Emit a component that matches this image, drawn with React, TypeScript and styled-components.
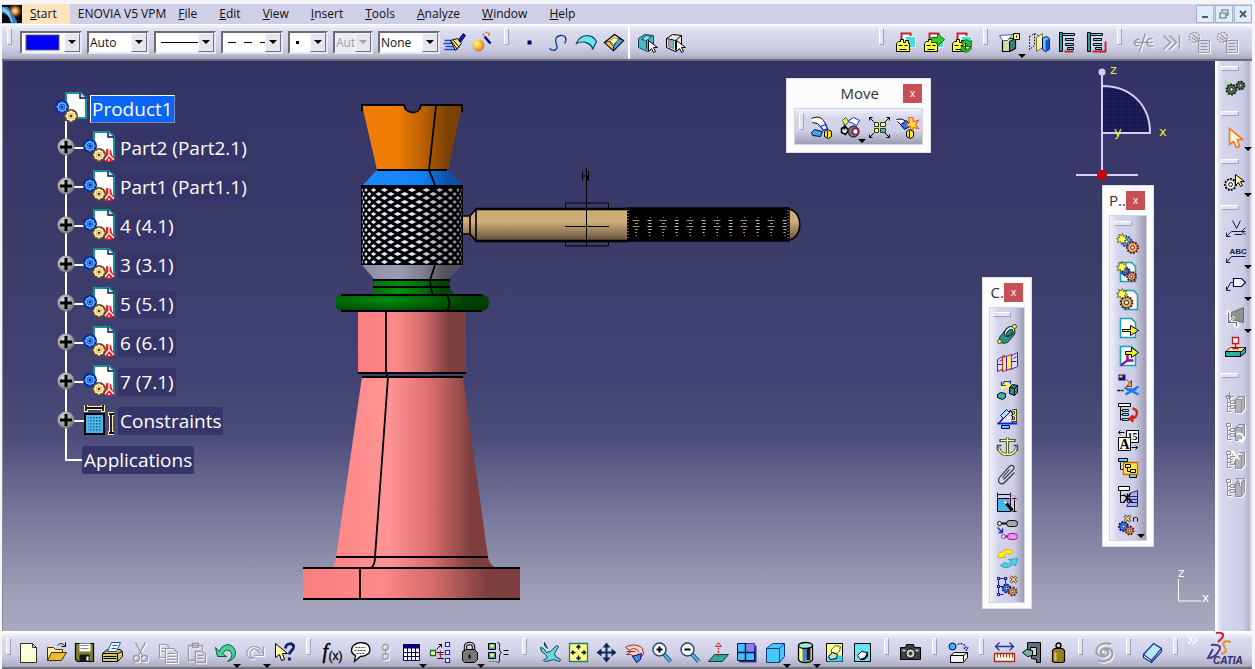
import React from 'react';
import styled, { createGlobalStyle, css } from 'styled-components';

const GlobalStyle = createGlobalStyle`
  * { box-sizing: border-box; }
  body { margin: 0; background: #f6f6fa; }
  body, button, select { font-family: "Open Sans", "Noto Sans", sans-serif; color: #111; }
  button { border: 0; padding: 0; margin: 0; background: none; }
  ul { list-style: none; margin: 0; padding: 0; }
`;

/* ---------- icon drawings, each on a 22 x 22 grid ---------- */

const K = '#000';
const NAVY = '#00007a';
const CYAN = '#5cdcf0';
const YEL = '#ffff60';

type GearProps = { x: number; y: number; r: number; fill: string; line?: string };
const Gear = ({ x, y, r, fill, line = K }: GearProps) => (
  <g>
    <circle cx={x} cy={y} r={r} fill={fill} stroke={line} strokeWidth={1.8} strokeDasharray="1.8 1.3" />
    <circle cx={x} cy={y} r={r - 0.8} fill={fill} stroke={line} strokeWidth={0.7} />
    <circle cx={x} cy={y} r={r * 0.35} fill="#fff" stroke={line} />
  </g>
);

const Sheet = ({ x = 3, y = 1, w = 15, h = 19 }) => (
  <path d={`M${x} ${y}h${w - 4}l4 4v${h - 4}h-${w}z`} fill="#fff" stroke="#18a0b4" strokeWidth={1.6} />
);

const Spark = ({ x = 6, y = 6 }) => (
  <path
    d={`M${x} ${y - 5}l1 3 3-1-1 3 2 1-3 1 1 3-3-1-1 2-1-3-3 1 1-3-2-1 3-1-1-3 3 1z`}
    fill={YEL}
    stroke="#403800"
    strokeWidth={0.7}
  />
);

const Tree = ({ c = '#8e8e98' }) => (
  <path d="M2 3h4v3H2zM3 6v13M3 10h3M3 14h3M6 8h4v3H6zM6 13h4v3H6zM3 19h4" fill="none" stroke={c} />
);

const GreyBox = () => (
  <path d="M11 7l3-3h6v12l-3 4h-6zM11 7h6l3-3M17 7v13" fill="#b4b4bc" stroke="#8e8e98" />
);

const Castle = () => (
  <g>
    <path d="M7 2h9v11H7z" fill="#fff" stroke="#c02828" strokeWidth={2} />
    <path d="M11 5h10v11H11z" fill="#50dcd8" stroke="#d8ffff" />
    <path d="M2 20v-8l2-2h2V8h3v3h2V9h3v3h1v8z" fill="#ffff40" stroke={K} />
    <path d="M4 14h4M10 14h3M5 18h7" stroke={K} fill="none" />
  </g>
);

const TreeDoc = () => (
  <g>
    <path d="M3 1h3v19H3z" fill="#20a09c" stroke={K} />
    <path d="M6 2h12v2H6zM9 7h8v2H9zM9 12h8v2H9zM11 16h6v2h-6z" fill={CYAN} stroke={K} />
    <path d="M8 20h9" stroke="#c02020" strokeWidth={2} />
  </g>
);

const Pointer = ({ x = 10, y = 8, fill = '#fff2a0', line = K }) => (
  <path d={`M${x} ${y}v11l3-3 2 4 2-1-2-4h4z`} fill={fill} stroke={line} />
);

const Lens = ({ minus = false }) => (
  <g>
    <path d="M12 12l7 8" stroke="#104a70" strokeWidth={4} />
    <path d="M12 12l7 8" stroke="#58c0dc" strokeWidth={2} />
    <circle cx={8} cy={8} r={6.5} fill="#fff" stroke="#184868" strokeWidth={1.4} />
    <path d={minus ? 'M5 8h6' : 'M5 8h6M8 5v6'} stroke={K} strokeWidth={2} />
  </g>
);

const icons: Record<string, React.ReactNode> = {
  brush: (
    <g>
      <path d="M1 9h7M0 12h9M2 15h10M1 18h11" stroke="#1048e0" strokeWidth={1.4} />
      <path d="M7 9l7-2 4 5-6 7z" fill="#ffe878" stroke={K} />
      <path d="M10 9l6 7M8 10l6 8" stroke={K} />
      <path d="M15 8l5-6 2 2-5 7z" fill="#102888" stroke={NAVY} />
    </g>
  ),
  wizard: (
    <g>
      <defs>
        <radialGradient id="ball" cx=".35" cy=".35" r=".8">
          <stop offset="0" stopColor="#fff890" />
          <stop offset=".5" stopColor="#f0b828" />
          <stop offset="1" stopColor="#c04890" />
        </radialGradient>
      </defs>
      <circle cx={7} cy={14} r={6} fill="url(#ball)" />
      <path d="M13 5l6 7" stroke={NAVY} strokeWidth={2.4} />
      <path d="M11 3h2M14 1h2M18 1l-1 3M12 6h1" stroke="#e06038" strokeWidth={1.4} />
    </g>
  ),
  point: <rect x={8} y={9} width={4} height={4} fill={NAVY} />,
  curve: <path d="M2 17c4 4 9 1 7-4s-1-8 4-9 7 4 4 8" fill="none" stroke="#1038a0" strokeWidth={1.3} />,
  surface: <path d="M1 12C4 3 16 1 21 10l-4 8c0-5-8-10-16-6z" fill="#68e8f0" stroke="#0c3c50" strokeWidth={1.2} />,
  solid: (
    <g>
      <path d="M1 11l10-8 9 6-10 10z" fill="#fff4b0" stroke={K} strokeWidth={1.3} />
      <path d="M1 11l9 8v-4l-4-5z" fill="#f0c860" stroke={K} strokeWidth={0.8} />
      <path d="M10 19l10-10-5-2-5 8z" fill="#38a8d0" stroke={K} strokeWidth={0.8} />
      <path d="M6 9l5-3 4 2-5 5z" fill="#fff8d0" stroke="#907020" strokeWidth={0.8} />
    </g>
  ),
  pick: (
    <g>
      <path d="M2 7l6-4 9 1v11l-6 5-9-4z" fill="#48b8c8" stroke="#184850" />
      <path d="M5 8l5-4 5 1-5 4zM10 9v9" fill="#90e8f0" stroke="#184850" />
      <Pointer x={12} y={9} fill="#fff" />
    </g>
  ),
  pickFace: (
    <g>
      <path d="M2 7l6-4 9 1v11l-6 5-9-4z" fill="#eaeaee" stroke={K} />
      <path d="M2 7l9 2 6-5M11 9v10" fill="none" stroke={K} />
      <path d="M4 9l5 1v7l-5-2z" fill="#58c8d8" stroke="#c06060" />
      <Pointer x={12} y={9} fill="#fff" />
    </g>
  ),
  castle: <Castle />,
  castleGo: (
    <g>
      <Castle />
      <path d="M9 6h6V2l7 6-7 7v-4H9z" fill="#40c828" stroke="#107010" />
    </g>
  ),
  castleSync: (
    <g>
      <Castle />
      <path d="M11 12c1-4 6-5 8-2l2-1v6h-6l2-2c-1-2-3-1-4 0zM21 16c-1 5-7 6-9 3l-2 1 1-5h5l-2 2c2 2 4 0 5-1z" fill="#30b828" stroke="#086010" strokeWidth={0.8} />
    </g>
  ),
  render: (
    <g>
      <path d="M3 9l4-2h9v10l-6 3H3z" fill="#d0dca0" stroke={K} strokeWidth={1.2} />
      <path d="M10 10v10l6-3V7z" fill="#308078" stroke={K} />
      <path d="M0 4l13-1-5 6H3z" fill="#fff" stroke="#3468a0" />
      <path d="M14 2h6v6h-6z" fill="#fff080" stroke={K} />
      <path d="M17 4v2" stroke={K} />
    </g>
  ),
  section: (
    <g>
      <path d="M1 5l5-3v12l-5 4zM6 2l4 2" fill="none" stroke={K} strokeDasharray="1.5 1.5" />
      <path d="M8 6l6-4v14l-6 4z" fill="#fff0a8" stroke="#807030" />
      <path d="M14 7l4-2 3 2v11l-4 2-3-2z" fill="#60c8f8" stroke={NAVY} />
      <path d="M17 9l4-2v11l-4 2z" fill="#1858c0" />
    </g>
  ),
  specTree: <TreeDoc />,
  specTreeRed: (
    <g>
      <TreeDoc />
      <path d="M21 10v10h-6" fill="none" stroke="#c02020" strokeWidth={1.8} />
    </g>
  ),
  cutLink: <path d="M13 2L7 20M7 8c-7-1-7 8 0 6M2 11h7M11 11h9M20 7c-7-1-8 8 0 8h1" fill="none" stroke="#9898a2" strokeWidth={1.5} />,
  skip: <path d="M3 4l7 7-7 7M9 4l7 7-7 7M19 4v14" fill="none" stroke="#9898a2" strokeWidth={1.5} />,
  listA: (
    <g fill="none" stroke="#9898a2">
      <circle cx={6} cy={6} r={5} strokeDasharray="2 1" strokeWidth={1.6} />
      <path d="M4 3l6 5M3 6l6 4" strokeWidth={1.2} />
      <path d="M10 9h11v12H10z" fill="#d8d8ea" />
      <path d="M12 12h7M12 15h7M12 18h7" />
    </g>
  ),
  planeTop: (
    <g>
      <path d="M0 2l12 8L1 20z" fill="#a8d8b0" />
      <Gear x={7} y={12} r={5} fill="#607060" line="#102010" />
      <Gear x={16} y={8} r={4} fill="#688068" line="#102010" />
    </g>
  ),
  select: <path d="M5 1v16l4-3 3 6 3-1-2-7h5z" fill="#fff0e0" stroke="#f07820" strokeWidth={1.6} />,
  gearSelect: (
    <g>
      <Gear x={6} y={11} r={5.5} fill="#fff" />
      <Pointer x={11} y={1} />
    </g>
  ),
  weld: <path d="M8 2l4 8 4-8M21 9l-4 4 4 3M2 18l5-5h14M10 16h8M2 18v-4M2 18h4" fill="none" stroke="#181850" />,
  textNote: (
    <g>
      <text x={5} y={9} fontSize={8} fontWeight={700} fontFamily="Liberation Sans" fill="#101840">ABC</text>
      <path d="M2 18l5-6h14M2 18v-4M2 18h4" fill="none" stroke="#181850" />
    </g>
  ),
  flagNote: (
    <g>
      <path d="M9 4h8l4 4-4 4H9z" fill="#fff" stroke={NAVY} strokeWidth={1.2} />
      <path d="M9 8H6l-4 8M2 16v-4M2 16h4" fill="none" stroke="#181850" />
    </g>
  ),
  view: (
    <g>
      <path d="M7 6l12-5v15l-12-3z" fill="#90908f" stroke="#68686c" />
      <path d="M4 6v10h8v4M4 16l6-6M2 8l2-3 2 3M9 18l3 3 3-3" fill="none" stroke="#f4f4f4" strokeWidth={2.6} />
      <path d="M4 6v10h8v4M4 16l6-6" fill="none" stroke="#68686c" />
    </g>
  ),
  stamp: (
    <g>
      <path d="M1 15l5-4h15l-5 5z" fill="#ffe0a0" stroke="#802010" />
      <path d="M1 15h15v5H1zM16 16l5-5v5l-5 4z" fill="#28b0b0" stroke={K} />
      <path d="M8 1h6v6H8zM11 7v5M8 12h6" fill="#fff" stroke="#c01818" strokeWidth={1.3} />
    </g>
  ),
  boxA: <g><Tree /><GreyBox /><path d="M5 0v8M1 4h8" stroke="#8e8e98" /></g>,
  boxB: <g><Tree /><GreyBox /><path d="M12 14c5-3 9 3 5 6h-3" fill="none" stroke="#fff" strokeWidth={2} /></g>,
  boxC: <g><Tree /><GreyBox /><path d="M7 2l8 9M15 4l-7 9" stroke="#fff" strokeWidth={1.6} /></g>,
  boxD: <g><Tree /><GreyBox /><path d="M12 2h8l-3 4v5l-2-1V6z" fill="#e8e8ee" stroke="#8e8e98" /></g>,
  /* moving parts */
  handMove: (
    <g>
      <path d="M1 2c5-2 9-2 12 2l3 5-5 2-4-4-5-1" fill="#fff" stroke={K} />
      <path d="M10 10l5-2 2 4-4 2z" fill="#e8f0ff" stroke="#1030d0" strokeWidth={1.3} />
      <path d="M1 16l3-3 8 2-2 5-8-1z" fill="#40a8c8" stroke={NAVY} />
      <path d="M14 15l3-2 4 2v5l-3 2-4-2zM17 14v7" fill="#ffe818" stroke={K} />
    </g>
  ),
  handSnap: (
    <g>
      <path d="M8 5l6-4 6 3-3 5-5-3z" fill="#fff" stroke="#1030d0" />
      <path d="M5 8v5M2 12l4-2 3 4-3 4-4-2z" fill="#e8e8e8" stroke={K} strokeWidth={1.5} />
      <path d="M3 4l3-3 3 4-3 4z" fill="#fff060" stroke="#207020" />
      <circle cx={14} cy={15} r={5.5} fill="#807080" stroke={K} />
      <circle cx={16} cy={15} r={3} fill="#fff" stroke="#802040" strokeWidth={1.6} />
    </g>
  ),
  explode: (
    <g>
      <path d="M1 1l5 5M21 1l-5 5M1 21l5-5M21 21l-5-5M1 4V1h3M18 1h3v3M1 18v3h3M18 21h3v-3" fill="none" stroke={K} />
      <path d="M6 6h4v4H6zM12 6h5v4h-5zM6 12h4v4H6z" fill="#ffff90" stroke="#303818" />
      <path d="M12 12h5v4h-5z" fill="#40c0c8" stroke="#303818" />
    </g>
  ),
  handStar: (
    <g>
      <path d="M0 3c5-1 8 0 11 4l-4 4-6-6" fill="#fff" stroke={K} />
      <path d="M4 8l6-4 5 5-7 4z" fill="#2078e0" stroke={NAVY} />
      <path d="M16 1l1 4 5-1-3 4 3 4-5-1-2 4-1-5-5-1 4-3-1-5z" fill="#ffe040" stroke="#e86020" strokeWidth={1.2} />
      <path d="M10 15l3-2 4 2v5l-3 2-4-2zM13 14v7" fill="#ffe818" stroke={K} />
    </g>
  ),
  /* constraints */
  coincidence: (
    <g>
      <path d="M3 14l7-9c6-3 10 1 8 6l-7 8c-5 2-9 0-8-5z" fill="#309080" stroke="#083830" />
      <ellipse cx={13} cy={8} rx={6} ry={4} transform="rotate(-45 13 8)" fill="#f0f8f4" stroke="#083830" />
      <ellipse cx={13} cy={9} rx={4} ry={2} transform="rotate(-45 13 9)" fill="#309080" stroke="#083830" />
      <circle cx={3} cy={18} r={2} fill={YEL} stroke="#404020" />
      <circle cx={18} cy={3} r={2} fill={YEL} stroke="#404020" />
    </g>
  ),
  contact: (
    <g>
      <path d="M1 8l7-4v13l-7 3zM14 5l7-4v14l-7 3z" fill="#e4e0ff" stroke="#4028a0" />
      <path d="M6 6l9-3v14l-9 3z" fill="#ffe870" stroke="#c03838" strokeWidth={1.2} />
      <path d="M1 13h5M15 10h5M10 5v14M3 10l3-2M17 7l3-2" stroke="#3018b0" fill="none" />
    </g>
  ),
  offset: (
    <g>
      <path d="M5 9l6-6M12 9l4-6" stroke="#ffff40" strokeWidth={4} />
      <path d="M6 5l2-3h6M5 2v4h4M14 1v4" fill="none" stroke="#1838c0" strokeWidth={1.2} />
      <path d="M13 8l3-3 5 1v7l-3 3-5-2z" fill="#308c8c" stroke={K} />
      <path d="M13 8l5 1v7M18 9l3-3" fill="none" stroke={K} />
      <path d="M1 15l3-2 5 1v4l-3 2-5-2z" fill="#40b0b0" stroke={K} />
    </g>
  ),
  angle: (
    <g>
      <path d="M2 16L14 3l2 3v10z" fill="#e8e8f8" stroke={NAVY} strokeWidth={1.2} />
      <path d="M1 16h20" stroke="#1028d0" strokeWidth={2} />
      <path d="M4 8l6-6 3 3-6 6z" fill="#a8e8f8" stroke={NAVY} />
      <path d="M5 18h8v3H5z" fill="#50c8e8" stroke={NAVY} />
      <path d="M16 3h3v4l-2 1 2 1v4h-4" fill="none" stroke={K} strokeWidth={2.8} />
      <path d="M16 3h3v4l-2 1 2 1v4h-4" fill="none" stroke="#ffff40" strokeWidth={1.4} />
    </g>
  ),
  anchor: (
    <g>
      <path d="M11 2v17M3 5h16M2 12c1 5 4 7 9 7s8-2 9-7" fill="none" stroke="#202810" strokeWidth={3} />
      <path d="M11 2v17M4 5h14M2 12c1 5 4 7 9 7s8-2 9-7" fill="none" stroke="#ffff98" strokeWidth={1.5} />
      <path d="M1 15v-5h4M21 15v-5h-4" fill="none" stroke="#18506a" strokeWidth={1.4} />
    </g>
  ),
  clip: <path d="M7 16L17 6c2-4-2-5-4-3L3 14c-3 5 2 8 5 5l10-10M6 14l7-8" fill="none" stroke="#303038" strokeWidth={1.1} />,
  fixDim: (
    <g>
      <path d="M1 7h13v13H1z" fill="#48b8e8" stroke={K} />
      <path d="M1 3h13M1 1v5M14 1v5M18 8v12M16 7h4M16 20h4" stroke={K} fill="none" />
      <path d="M6 10h9M14 2l7 5M12 8h9" stroke="#e060d0" strokeDasharray="1 1.6" strokeWidth={1.6} />
      <path d="M9 11l7 8" stroke={K} strokeWidth={3} />
      <path d="M8 10l2 2" stroke="#fff" strokeWidth={2} />
    </g>
  ),
  pins: (
    <g>
      <circle cx={3} cy={4} r={2} fill="#fff" stroke={K} />
      <path d="M5 4h5" stroke={K} strokeWidth={2} />
      <rect x={10} y={1} width={11} height={6} rx={3} fill="#a0b0a8" stroke={K} />
      <circle cx={7} cy={17} r={2} fill="#fff" stroke="#9020a0" />
      <path d="M9 17h3" stroke="#801090" strokeWidth={2} />
      <rect x={11} y={14} width={10} height={6} rx={3} fill="#f090f0" stroke="#901898" />
      <path d="M1 8l5 5M6 9v4H2" fill="none" stroke="#1020c0" strokeWidth={1.3} />
    </g>
  ),
  swap: (
    <g>
      <path d="M1 10l2-6 2 1c4-4 8-4 12-1l-3 3c-3-2-5-1-7 1l3 2z" fill="#ffee20" stroke="#c0b000" strokeWidth={0.8} />
      <path d="M21 11l-2 7-3-1c-4 4-8 4-12 1l4-3c3 2 5 1 7-1l-3-2z" fill="#50d0f0" stroke="#2090b0" strokeWidth={0.8} />
    </g>
  ),
  pattern: (
    <g>
      <path d="M2 2v17M2 3h9M2 11h7M2 19h5M9 3v6" stroke="#1020c0" fill="none" />
      <path d="M1 2h2v2H1zM8 2h2v2H8zM1 10h2v2H1zM1 18h2v2H1z" fill="#fff" stroke={NAVY} />
      <Gear x={10} y={13} r={4} fill="#50b8f0" line={NAVY} />
      <Gear x={16} y={16} r={4} fill="#ffc890" line="#501808" />
      <path d="M14 1l6 6M20 1l-6 6" stroke="#302000" strokeWidth={2.8} />
      <path d="M14 1l6 6M20 1l-6 6" stroke="#ffe090" strokeWidth={1.4} />
    </g>
  ),
  /* product structure */
  newGears: <g><Gear x={9} y={8} r={5} fill="#70b0f0" line="#1838a0" /><Spark x={5} y={5} /><Gear x={15} y={14} r={5.5} fill="#ffb880" line="#501008" /></g>,
  newProduct: <g><Sheet /><Gear x={8} y={10} r={4} fill="#4898f0" line={NAVY} /><Spark x={5} y={5} /><Gear x={14} y={15} r={4.5} fill="#ffb880" line="#501008" /></g>,
  newPart: <g><Sheet x={7} w={13} /><Gear x={9} y={13} r={6} fill="#d8b070" line="#302010" /><Spark x={5} y={4} /></g>,
  insert: <g><Sheet /><path d="M5 12h8V8l8 5-8 5v-4H5z" fill="#f8f020" stroke={K} /></g>,
  insertPos: <g><Sheet /><path d="M3 20l7-5V9M10 15h6" fill="none" stroke="#9010a0" strokeWidth={2.4} /><path d="M8 6h6V2l7 5-7 5V9H8z" fill="#f8f020" stroke={K} /></g>,
  replace: (
    <g>
      <path d="M1 1h7v6H1z" fill="#101080" />
      <path d="M2 2h3v2H2z" fill="#ffe020" />
      <path d="M9 6l3 3M14 7v6H9z" fill="#ffa020" stroke="#804000" />
      <path d="M7 14l14 7M21 13L8 21M9 16h10" stroke="#1878e8" strokeWidth={2.4} />
      <path d="M0 17h3M4 17h2" stroke={K} strokeWidth={1.4} />
    </g>
  ),
  reorder: (
    <g>
      <path d="M1 2h12v3H1z" fill="#fff" stroke={K} />
      <path d="M3 5v14M3 9h3M3 13h3M3 18h3" fill="none" stroke={K} />
      <path d="M5 8h6v2H5zM5 12h6v2H5zM5 17h6v2H5z" fill={CYAN} stroke={K} strokeWidth={0.8} />
      <path d="M15 7c6 1 6 9-1 10M16 20l-4-3 4-3" fill="none" stroke="#c82818" strokeWidth={2.4} />
    </g>
  ),
  numbering: (
    <g>
      <path d="M9 1h12v12H9z" fill="#fff" stroke={K} />
      <text x={10} y={10} fontSize={10} fontWeight={700} fontFamily="Liberation Serif">15</text>
      <path d="M1 8h12v13H1z" fill="#fff" stroke={K} />
      <text x={2} y={19} fontSize={14} fontWeight={700} fontFamily="Liberation Serif">A</text>
      <path d="M1 3h6M3 1L1 3l2 2M14 18h6M18 16l2 2-2 2" fill="none" stroke={K} />
    </g>
  ),
  graphTree: (
    <g>
      <path d="M1 1h9v3H1zM12 17h7v3h-7z" fill={CYAN} stroke={K} />
      <path d="M3 5v7h3" fill="none" stroke={K} />
      <path d="M6 5h14v12H6z" fill="#ffe838" stroke="#d06020" strokeWidth={1.3} />
      <path d="M8 7h5v3H8zM13 12h5v3h-5z" fill="#fff470" stroke={K} />
      <path d="M10 10v4h3" fill="none" stroke={K} />
    </g>
  ),
  loadTree: (
    <g>
      <path d="M1 1h11v4H1z" fill="#fff" stroke={K} />
      <path d="M3 5v12h4M3 10h5" fill="none" stroke={K} />
      <path d="M12 8l8-3v16H9l3-5z" fill="#b0b0e8" stroke="#2020a0" />
      <path d="M12 11h8M12 14h8M11 17h9" stroke="#2020a0" />
      <path d="M6 9l9 8M13 8l-7 9M10 8v9" stroke={K} strokeWidth={1.4} />
    </g>
  ),
  instances: (
    <g>
      <Gear x={6} y={13} r={4.5} fill="#40a8e8" line={NAVY} />
      <Gear x={12} y={17} r={4} fill="#ffb880" line="#501008" />
      <path d="M7 2l6 6M13 2L7 8" stroke="#302000" strokeWidth={2.6} />
      <path d="M7 2l6 6M13 2L7 8" stroke="#ffe8a0" strokeWidth={1.2} />
      <path d="M16 8V4M16 5c2-2 4-1 4 0v3" fill="none" stroke={K} />
    </g>
  ),
  /* standard */
  file: <path d="M3 2h12l4 4v15H3zM15 2v4h4" fill="#ffffd8" stroke="#303028" />,
  open: (
    <g>
      <path d="M2 19V6h6l2 2h7v4" fill="#fff0a0" stroke="#403000" />
      <path d="M2 19l4-8h15l-5 8z" fill="#f0b830" stroke="#403000" />
      <path d="M12 4c3-3 5-2 7 0M20 1v4h-4" fill="none" stroke={K} />
    </g>
  ),
  save: (
    <g>
      <path d="M2 2h18v18H4l-2-2z" fill="#80802c" stroke={K} strokeWidth={1.2} />
      <path d="M6 2h11v8H6z" fill="#fff" />
      <path d="M7 4h8M7 7h8" stroke="#7888a0" />
      <path d="M6 13h10v7H6z" fill="#181818" />
      <path d="M13 15h2v4h-2z" fill="#fff" />
    </g>
  ),
  print: (
    <g>
      <path d="M1 12l5-4h13l2 3v4l-5 5H1z" fill="#d8c868" stroke={K} />
      <path d="M1 12h15v8M16 12l5-2M2 15h13M2 17h13" fill="none" stroke={K} />
      <path d="M6 10l4-9h9l-4 9z" fill="#fff" stroke="#2050b0" />
      <path d="M11 4h5M10 7h5" stroke="#2050b0" />
    </g>
  ),
  cut: (
    <g fill="none" stroke="#9898a2" strokeWidth={1.4}>
      <path d="M6 1l7 13M16 1L9 14" />
      <circle cx={7} cy={17} r={3} />
      <circle cx={15} cy={17} r={3} />
    </g>
  ),
  copy: <path d="M8 16H2V3h7l3 3M8 7h8l4 4v10H8zM10 12h8M10 15h8M10 18h8M4 7h3M4 10h3" fill="none" stroke="#9898a2" strokeWidth={1.2} />,
  paste: <path d="M3 4h14v5M3 4v15h7M7 2h6v4H7zM10 10h7l3 3v8H10zM12 14h6M12 17h6" fill="none" stroke="#9898a2" strokeWidth={1.4} />,
  undo: <path d="M1 6l2 9h9l-4-3c3-5 8-4 9 0 1 3-1 6-4 8 8-2 10-9 6-14S7 3 5 10z" fill="#48d098" stroke="#085838" />,
  redo: <path d="M19 5v9h-9M19 13c-2-8-12-11-16-4-2 5 2 9 6 8-3-2-5-5-2-8s8 0 9 4" fill="none" stroke="#a0a0aa" strokeWidth={1.2} />,
  help: (
    <g>
      <path d="M2 2v14l4-3 2 6 3-1-2-6h5z" fill="#ffffa0" stroke={K} />
      <path d="M12 7c0-6 9-6 8-1-1 4-4 3-4 7M16 16v3" fill="none" stroke="#102868" strokeWidth={3} />
    </g>
  ),
  formula: (
    <g>
      <text x={1} y={16} fontSize={20} fontStyle="italic" fontFamily="Liberation Serif" stroke={K} strokeWidth={0.5}>f</text>
      <text x={7} y={18} fontSize={12} fontFamily="Liberation Sans" stroke={K} strokeWidth={0.3}>(x)</text>
    </g>
  ),
  comment: (
    <g>
      <path d="M4 4c4-4 14-4 16 2s-4 9-9 9l-6 5 1-6C1 12 1 7 4 4z" fill="#fff" stroke={K} strokeWidth={1.3} />
      <path d="M6 6h10M5 9h11M7 12h8" stroke="#404040" strokeDasharray="2 1" />
    </g>
  ),
  link: (
    <g fill="none" stroke="#a0a0aa" strokeWidth={1.6}>
      <circle cx={11} cy={6} r={3} />
      <circle cx={11} cy={15} r={3} />
      <path d="M11 7v7" />
    </g>
  ),
  table: (
    <g>
      <path d="M3 3h16v16H3z" fill="#fff" stroke={NAVY} />
      <path d="M3 3h16v4H3z" fill={NAVY} />
      <path d="M3 11h16M3 15h16M7 6v13M11 6v13M15 6v13" stroke={NAVY} />
    </g>
  ),
  relations: (
    <g>
      <path d="M16 1h4v4h-4zM16 9h4v4h-4zM16 17h4v4h-4z" fill="#fff" stroke="#1828d0" strokeWidth={1.2} />
      <path d="M1 9h5v5H1z" fill="#ffffa0" stroke="#186838" strokeWidth={1.3} />
      <path d="M7 8l5-5M9 3h3v3M7 11h7M8 17h6" fill="none" stroke={K} />
      <path d="M11 9v8M9 13h5" stroke="#b02040" />
    </g>
  ),
  lock: (
    <g>
      <path d="M7 10V5c0-4 8-4 8 0v5" fill="none" stroke={K} strokeWidth={3.4} />
      <path d="M7 10V5c0-4 8-4 8 0v5" fill="none" stroke="#c8c8c8" strokeWidth={1.4} />
      <path d="M4 10l4-2h8l3 3v7l-3 3H6l-2-2z" fill="#787878" stroke={K} />
      <path d="M11 13v4" stroke={K} strokeWidth={2} />
    </g>
  ),
  equiv: (
    <g>
      <path d="M1 2h7v6H1zM1 11h7v6H1z" fill="#40a898" stroke={K} />
      <path d="M3 3h3v3H3zM3 12h3v3H3z" fill="#ffff90" />
      <path d="M2 20h1M5 20h1M8 20h1M10 1c3 0 2 3 2 5s0 4 2 5c-2 1-2 3-2 5s1 5-2 5" fill="none" stroke={K} />
      <path d="M16 9h5M16 13h5" stroke={K} />
    </g>
  ),
  fly: <path d="M1 6l3 1 3 4 4-1 6-6 2 1-4 7 1 3 5 3-1 2-6-2-3 1-5 1-2-1 4-3-2-3-4-3zM5 1l3 6-3-3z" fill="#68d8e8" stroke="#104048" />,
  fitAll: (
    <g>
      <path d="M2 2h18v18H2z" fill="#ffff90" stroke="#208060" strokeWidth={1.3} />
      <path d="M11 4v4M11 14v4M4 11h4M14 11h4M9 6l2-2 2 2M9 16l2 2 2-2M6 9l-2 2 2 2M16 9l2 2-2 2" fill="none" stroke={K} strokeWidth={1.3} />
    </g>
  ),
  pan: (
    <g>
      <path d="M11 3v16M3 11h16" stroke="#102858" strokeWidth={2} />
      <path d="M11 1l4 5H7zM11 21l4-5H7zM1 11l5-4v8zM21 11l-5-4v8z" fill="#102858" />
    </g>
  ),
  rotate: (
    <g>
      <path d="M2 6c6-4 13-3 17 1l1 6-4 4-9-4H3l5-3z" fill="#ffd0c0" stroke="#803830" />
      <path d="M3 10h9M7 8c4-2 8 0 8 3" fill="none" stroke="#803830" />
      <path d="M9 15l9-3-1 6-4 3z" fill="#3890d8" stroke={NAVY} />
    </g>
  ),
  zoomIn: <Lens />,
  zoomOut: <Lens minus />,
  normal: (
    <g>
      <path d="M1 20l6-7h14l-6 7z" fill="#30a8a8" stroke="#103848" />
      <path d="M11 15V5" stroke="#c03030" strokeDasharray="2 1.4" strokeWidth={1.4} />
      <path d="M11 1l3 4H8z" fill="#ffb8a0" stroke="#a04040" />
    </g>
  ),
  views: (
    <g>
      <path d="M4 4h17v17H4z" fill="#303060" />
      <path d="M2 2h17v17H2z" fill="#40c0f0" stroke={NAVY} />
      <path d="M11 2h8v8h-8z" fill="#9080e0" />
      <path d="M10 2v17M2 11h17" stroke={NAVY} strokeWidth={1.4} />
    </g>
  ),
  cube: (
    <g>
      <path d="M2 7l6-5h12v13l-5 6H2z" fill="#48c8f8" stroke="#103890" />
      <path d="M2 7h13l5-5M15 7v14" fill="none" stroke="#103890" />
    </g>
  ),
  shaded: (
    <g>
      <path d="M4 4v14c1 4 13 4 14 0V4" fill="#ffff70" stroke={K} strokeWidth={1.3} />
      <path d="M8 6h4v14H8z" fill="#3890c0" />
      <path d="M12 6h4v13h-4z" fill="#101860" />
      <ellipse cx={11} cy={4} rx={7} ry={3} fill="#a8e8d8" stroke={K} strokeWidth={1.3} />
    </g>
  ),
  hideShow: (
    <g>
      <path d="M3 2h16v18H3z" fill="#ffff90" stroke={K} />
      <path d="M4 14h15v6H4z" fill="#40d0f0" />
      <path d="M8 8l4-4 5 1-1 5-3 2-5-1z" fill="#ffffc0" stroke="#606020" />
      <path d="M5 15l4-4 5 2-1 4-6 1z" fill="#b8e8c8" stroke={K} />
    </g>
  ),
  swapSpace: (
    <g>
      <path d="M3 2h16v18H3z" fill="#68e4f8" stroke={K} />
      <path d="M6 14l4-4 6 1-2 5-5 2z" fill="#fff" stroke={K} />
      <path d="M9 18l5-2 2-5v4l-3 3z" fill="#206858" stroke={K} />
    </g>
  ),
  camera: (
    <g>
      <path d="M1 6h5l1-3h7l1 3h6v12H1z" fill="#404044" stroke={K} />
      <circle cx={11} cy={12} r={4.5} fill="#d8d8d8" stroke={K} />
      <circle cx={11} cy={12} r={2} fill="#404048" />
      <path d="M3 9h3M16 9h3" stroke="#e8e8e8" strokeWidth={1.4} />
    </g>
  ),
  catalog: (
    <g>
      <circle cx={5} cy={5} r={3.5} fill="#40b8e0" stroke={NAVY} />
      <path d="M10 3c5-2 8 0 9 5M16 6l3 3 2-4" fill="none" stroke="#1838a0" strokeDasharray="2 1" strokeWidth={1.3} />
      <path d="M3 14l4-3h13v5l-4 5H3z" fill="#f0f0f4" stroke={K} />
      <path d="M3 14h13l4-3M16 14v6" fill="none" stroke={K} />
    </g>
  ),
  measure: (
    <g>
      <path d="M2 5h18M6 1L2 5l4 4M16 1l4 4-4 4" fill="none" stroke="#1838a0" strokeWidth={1.3} />
      <path d="M1 12h20v8H1z" fill="#fff8e8" stroke="#b02818" strokeWidth={1.3} />
      <path d="M4 12v4M7 12v4M10 12v4M13 12v4M16 12v4M19 12v4" stroke="#b02818" />
    </g>
  ),
  caliper: (
    <g>
      <path d="M6 1h13v20h-4v-3l-5-1v-3h5V6H9v3H6z" fill="#607074" stroke={K} />
      <path d="M1 11l4-3 6 1v5l-5 1z" fill="#70b8a8" stroke={K} />
    </g>
  ),
  weight: (
    <g>
      <circle cx={11} cy={4} r={2.5} fill="none" stroke={K} strokeWidth={1.4} />
      <path d="M7 7h8l2 2v11l-2 1H7l-2-1V9z" fill="#988018" stroke={K} strokeWidth={1.2} />
      <path d="M8 11v8" stroke="#e0c860" strokeWidth={2} />
    </g>
  ),
  spiral: <path d="M18 3c-8-3-15 1-15 7 0 5 7 6 10 4s2-6-2-5M4 19c8 3 15-1 15-7 0-5-7-6-10-4s-2 6 2 5" fill="none" stroke="#a0a0a8" strokeWidth={2.2} />,
  book: (
    <g>
      <path d="M2 13v3l8 5 10-11V7" fill="#fff" stroke="#1030a0" strokeWidth={1.2} />
      <path d="M2 13L12 2l8 5-10 12z" fill="#b8e8f8" stroke="#1030a0" strokeWidth={1.2} />
      <path d="M10 19v2" stroke="#1030a0" />
    </g>
  ),
};

const IconSvg = styled.svg<{ $off?: boolean }>`
  display: block;
  width: 22px;
  height: 22px;
  overflow: visible;
  ${p => p.$off && css`filter: drop-shadow(1px 1px 0 #fff);`}
`;

const Slot = styled.button<{ $size?: number; $column?: boolean }>`
  position: relative;
  display: flex;
  flex: none;
  align-items: center;
  justify-content: center;
  width: ${p => (p.$column ? 36 : p.$size ?? 28)}px;
  height: ${p => (p.$column ? p.$size ?? 28 : 28)}px;
`;

const Caret = styled.span<{ $column?: boolean }>`
  position: absolute;
  right: ${p => (p.$column ? 1 : -1)}px;
  bottom: ${p => (p.$column ? 0 : -2)}px;
  border: 4px solid transparent;
  border-top-color: #000;
  border-bottom-width: 0;
`;

const Grip = styled.span<{ $size?: number; $column?: boolean }>`
  display: flex;
  flex: none;
  align-items: ${p => (p.$column ? 'center' : 'flex-start')};
  justify-content: ${p => (p.$column ? 'flex-start' : 'center')};
  width: ${p => (p.$column ? 36 : p.$size ?? 20)}px;
  height: ${p => (p.$column ? p.$size ?? 20 : 28)}px;
  padding-left: ${p => (p.$column ? 4 : 0)}px;
  &::before {
    content: '';
    width: ${p => (p.$column ? 16 : 3)}px;
    height: ${p => (p.$column ? 3 : 15)}px;
    border: 1px solid #fff;
    border-right-color: #a0a0b4;
    border-bottom-color: #a0a0b4;
    background: #e4e4f2;
  }
`;

const OFF = new Set(['cutLink', 'skip', 'listA', 'boxA', 'boxB', 'boxC', 'boxD', 'cut', 'copy', 'paste', 'redo', 'link', 'spiral']);

/* A tool is an icon name; "name+" has a pop-up caret, "|" is a grip; an optional number sets its length. */
type Tool = string | [string, number];

const Tools = ({ items, column }: { items: Tool[]; column?: boolean }) => (
  <>
    {items.map((item, i) => {
      const [key, size] = Array.isArray(item) ? item : [item, undefined];
      if (key === '|') return <Grip key={i} $size={size} $column={column} />;
      const menu = key.endsWith('+');
      const name = menu ? key.slice(0, -1) : key;
      return (
        <Slot key={i} type="button" aria-label={name} disabled={OFF.has(name)} $size={size} $column={column}>
          <IconSvg viewBox="-0.5 -0.5 22 22" $off={OFF.has(name)} aria-hidden="true">{icons[name]}</IconSvg>
          {menu && <Caret $column={column} />}
        </Slot>
      );
    })}
  </>
);

/* ---------- frame ---------- */

const Frame = styled.div`
  display: flex;
  flex-direction: column;
  min-height: 100vh;
  padding: 4px 3px 1px 2px;
  background: #f6f6fa;
`;

const MenuBar = styled.nav`
  display: flex;
  align-items: stretch;
  height: 20px;
  background: #cfcfe7;
`;

const AppMark = styled.svg`
  width: 20px;
  height: 18px;
  margin-top: 1px;
`;

const MenuItem = styled.button<{ $active?: boolean; $wide?: boolean }>`
  flex: none;
  padding: ${p => (p.$active ? '0 13px 0 8px' : p.$wide ? '0 1px 0 8px' : '0 11px')};
  font-size: 12px;
  line-height: 20px;
  white-space: nowrap;
  background: ${p => (p.$active ? '#fde4bc' : 'transparent')};
  &::first-letter { text-decoration: ${p => (p.$wide ? 'none' : 'underline')}; }
`;

const WindowButtons = styled.div`
  display: flex;
  gap: 1px;
  margin: 1px 0 0 auto;
`;

const WindowButton = styled.button`
  width: 18px;
  height: 18px;
  border: 1px solid #a4b4cc;
  background: #e0ecf8;
  svg { display: block; width: 16px; height: 16px; }
`;

const TopBar = styled.div`
  display: flex;
  align-items: center;
  height: 37px;
  padding: 0 11px 0 0;
  border-top: 1px solid #fff;
  border-bottom: 2px solid #6c6c78;
  background: linear-gradient(#f4f4fc 0, #dcdcf0 6px, #cfcfe6 22px, #b4b4cc 32px, #a2a2b8 100%);
`;

const Combos = styled.div`
  display: flex;
  gap: 5px;
  margin-left: 4px;
`;

const Combo = styled.span<{ $small?: boolean }>`
  display: grid;
  width: ${p => (p.$small ? 40 : 62)}px;
  height: 23px;
  border: 2px solid;
  border-color: #6c6c74 #e8e8f0 #e8e8f0 #6c6c74;
  background: #fff;
  > * { grid-area: 1 / 1; }
`;

const Select = styled.select`
  width: 100%;
  height: 19px;
  padding: 0 0 0 1px;
  border: 0;
  appearance: none;
  background: transparent;
  font-size: 12px;
  &:disabled { color: #a0a0a4; background: #ececf2; opacity: 1; }
`;

const Sample = styled.svg`
  width: 100%;
  height: 19px;
  pointer-events: none;
`;

const ComboArrow = styled.span<{ $off?: boolean }>`
  display: flex;
  align-items: center;
  justify-content: center;
  justify-self: end;
  width: 16px;
  height: 19px;
  border: 1px solid;
  border-color: #f8f8fc #70707c #70707c #f8f8fc;
  background: #e6e6ee;
  pointer-events: none;
  &::before {
    content: '';
    border: 4px solid transparent;
    border-top-color: ${p => (p.$off ? '#a0a0a4' : '#000')};
    border-bottom-width: 0;
  }
`;

const Divider = styled.span`
  width: 5px;
  height: 33px;
  border-left: 2px solid #fff;
`;

const Spacer = styled.span`
  flex: 1;
`;

const Work = styled.div`
  display: flex;
  flex: 1;
  min-height: 570px;
`;

const Viewport = styled.main`
  position: relative;
  flex: 1;
  min-width: 0;
  padding: 28px 0 0 53px;
  overflow: hidden;
  border-left: 1px solid #8c8c98;
  background: linear-gradient(#333366 0%, #3b3b6a 30%, #434373 56%, #4d4d7b 66%, #79799c 80%, #a0a0b8 94%, #a9a9c0 100%);
`;

const SideBar = styled.aside`
  display: flex;
  flex-direction: column;
  width: 37px;
  border-left: 2px solid #fff;
  background: linear-gradient(90deg, #f2f2fa 0, #d6d6ec 5px, #cdcde6 26px, #b4b4cc 32px, #ececf6 100%);
`;

const BottomBar = styled.footer`
  display: flex;
  align-items: center;
  height: 38px;
  padding: 3px 0 0;
  border-top: 2px solid #fff;
  border-bottom: 2px solid #70707c;
  background: linear-gradient(#f6f6fc 0, #dcdcf0 6px, #cfcfe7 22px, #b8b8d0 30px, #a4a4ba 100%);
`;

const Logo = styled.svg`
  flex: none;
  width: 46px;
  height: 38px;
  margin-top: -6px;
  overflow: visible;
`;

/* ---------- specification tree ---------- */

const Row = styled.li`
  display: flex;
  align-items: center;
  height: 39px;
`;

const Joint = styled.svg<{ $end?: boolean }>`
  flex: none;
  width: ${p => (p.$end ? 26 : 28)}px;
  height: 39px;
`;

const NodeIcon = styled.svg`
  flex: none;
  width: 34px;
  height: 32px;
  overflow: visible;
`;

const Label = styled.span<{ $selected?: boolean }>`
  padding: 0 2px;
  font-size: 19px;
  line-height: 28px;
  white-space: nowrap;
  color: #fff;
  background: ${p => (p.$selected ? '#0a64f5' : '#353569')};
  border-radius: 2px;
  ${p => p.$selected && css`
    border: 1px solid #7a8cc0;
    border-top-color: #fff;
    border-left-color: #fff;
    padding: 0 1px;
    border-radius: 0;
    line-height: 26px;
  `}
`;

const parts = ['Part2 (Part2.1)', 'Part1 (Part1.1)', '4 (4.1)', '3 (3.1)', '5 (5.1)', '6 (6.1)', '7 (7.1)'];

const Plus = () => (
  <Joint viewBox="0 0 28 39">
    <path d="M10 0v39M18 20h10" stroke="#fff" strokeWidth={2} />
    <circle cx={10} cy={19} r={8.5} fill="url(#knob)" />
    <path d="M10 13v12M4 19h12" stroke="#000" strokeWidth={3} />
  </Joint>
);

const ProductIcon = ({ part }: { part?: boolean }) => (
  <NodeIcon viewBox="0 0 34 32">
    {!part && <path d="M10 28v8" stroke="#fff" strokeWidth={2} />}
    <path d="M10 0h15l5 5v20H10z" fill="#fff" stroke="#18909c" strokeWidth={2} />
    <path d="M24 0v5h6" fill="#c8e8f8" stroke="#101040" strokeWidth={1.4} />
    <circle cx={6} cy={14} r={7} fill="#0828a0" />
    <circle cx={6} cy={14} r={4} fill="#1050c0" stroke="#60b4ff" strokeWidth={1.6} />
    <path d="M6 8v12M0 14h12M2 10l8 8M10 10l-8 8" stroke="#50a8f8" strokeWidth={0.9} />
    <rect x={5} y={13} width={2} height={2} fill="#0828a0" />
    {part && (
      <g>
        <path d="M22 17l5 1 1 5 3 4-4 3h-6z" fill="#e82028" />
        <path d="M25 18v5l-4 5M25 23l5 5M24 28h2" fill="none" stroke="#fff" strokeWidth={1.3} />
      </g>
    )}
    <circle cx={15} cy={23} r={7} fill="#5c4838" />
    <circle cx={15} cy={23} r={4} fill="#c0a060" stroke="#ffe8a0" strokeWidth={2} />
    <path d="M15 17v12M9 23h12M11 19l8 8M19 19l-8 8" stroke="#ffe8a0" />
    <rect x={14} y={22} width={2} height={2} fill="#503820" />
  </NodeIcon>
);

const ConstraintsIcon = () => (
  <NodeIcon viewBox="0 0 34 32">
    <path d="M2 3h18M2 0v7M19 0v7M24 9h6M24 28h6M27 10v17" stroke="#fff4b0" strokeWidth={4} />
    <path d="M3 3h15M2 0v6M19 0v6M25 9h5M25 28h5M27 10v17" stroke="#101020" strokeWidth={1.8} />
    <rect x={1} y={9} width={19} height={20} fill="#50b8e8" stroke="#000" strokeWidth={2} />
    <rect x={4} y={12} width={13} height={14} fill="url(#dots)" />
  </NodeIcon>
);

/* ---------- model ---------- */

const Model = styled.svg`
  position: absolute;
  left: 297px;
  top: 29px;
  width: 510px;
  height: 520px;
`;

const Compass = styled.svg`
  position: absolute;
  right: 33px;
  top: 1px;
  width: 112px;
  height: 122px;
`;

const MiniAxes = styled.svg`
  position: absolute;
  right: 0;
  bottom: 26px;
  width: 45px;
  height: 40px;
`;

const knurls: { x: number; y: number; w: number }[] = [];
for (let c = -10; c <= 10; c++) {
  const a = c * 0.146;
  for (let r = 0; r < 10; r++) {
    const y = 190 + r * 8 + (c % 2 ? 4 : 0);
    if (y < 264) knurls.push({ x: 412 + 50 * Math.sin(a), y, w: 4.2 * Math.cos(a) });
  }
}

const shade = (id: string, a: string, b: string, c: string, d: string) => (
  <linearGradient id={id}>
    <stop offset="0" stopColor={a} />
    <stop offset=".35" stopColor={b} />
    <stop offset=".6" stopColor={c} />
    <stop offset=".85" stopColor={d} />
    <stop offset="1" stopColor={d} />
  </linearGradient>
);

const Assembly = () => (
  <Model viewBox="300 90 510 520" aria-label="Assembly model">
    <defs>
      {shade('pink', '#fb7e7e', '#ff8a8a', '#d46c6c', '#7c3e3e')}
      {shade('cone', '#ff8484', '#ff9494', '#dc6e6e', '#7c3e3e')}
      {shade('orange', '#ee7c08', '#ee7c04', '#bc6204', '#7c4000')}
      {shade('green', '#006c08', '#00900c', '#007008', '#004404')}
      {shade('blue', '#1888ff', '#1888ff', '#1080f0', '#0c50a8')}
      {shade('grey', '#8c8ca8', '#9c9cb4', '#80808f', '#50505c')}
      <linearGradient id="tan" x2="0" y2="1">
        <stop offset="0" stopColor="#ccaa78" />
        <stop offset=".4" stopColor="#d0ae7c" />
        <stop offset="1" stopColor="#645038" />
      </linearGradient>
      <linearGradient id="rim" x2="0" y2="1">
        <stop offset="0" stopColor="#003000" stopOpacity=".3" />
        <stop offset=".4" stopColor="#003000" stopOpacity="0" />
        <stop offset="1" stopColor="#003000" stopOpacity=".7" />
      </linearGradient>
    </defs>
    <g stroke="#000" strokeWidth={1.6} fill="none">
      <path d="M462 216h8l6-7h152v32H476l-6-7h-8z" fill="url(#tan)" />
      <path d="M476 209h152M476 241h152" strokeWidth={2.4} />
      <path d="M470 216v18M476 208v34" />
      <path d="M787 209c17 0 17 31 0 31z" fill="url(#tan)" />
      <path d="M628 208h161v33H628z" fill="#000" />
      {Array.from({ length: 12 }, (_, i) => {
        const x = 636 + i * 13.5;
        const w = i % 2 ? 2 : 3.5;
        return (
          <path
            key={i}
            d={`M${x - w} 220.500h${w * 2}M${x - w} 226.500h${w * 2}M${x - 1} 223.500h3M${x - 1} 229.500h3M${x - 1} 232.500h2M${x} 217.500h1M${x} 235.500h1`}
            stroke={i % 2 ? '#c8c0b0' : '#b08c60'}
            strokeWidth={1}
          />
        );
      })}
      <path d="M628 210v30M788 210v30" stroke="#d0b080" strokeDasharray="1 2" strokeWidth={1} />
      <path d="M586.500 168v79M565.500 210v-7h43v7M565.500 240v6h43v-6M565 226.500h44" strokeWidth={1} />
      <path d="M582.500 171v10M586 171l2 10M588.500 171v9M582 176h5" strokeWidth={1} />
    </g>
    <path d="M362 105h41c2 9 16 9 18 0h41l-14 65h-71z" fill="url(#orange)" />
    <path d="M377 170h71l15 16H362z" fill="url(#blue)" />
    <path d="M362 265h100l-14 15h-73z" fill="url(#grey)" />
    <path d="M373 280h77v9l5 6h-85l5-6z" fill="url(#green)" />
    <rect x={335} y={294} width={154} height={17} rx={8} fill="url(#green)" />
    <rect x={335} y={294} width={154} height={17} rx={8} fill="url(#rim)" />
    <path d="M358 311h108v62H358z" fill="url(#pink)" />
    <path d="M362 377h101l25 180c1 6 4 9 9 11H329c4-1 7-5 7-11z" fill="url(#cone)" />
    <path d="M303 568h217v31H303z" fill="url(#pink)" />
    <rect x={361} y={185} width={102} height={80} fill="#000" />
    {knurls.map((k, i) => (
      <path
        key={i}
        d={`M${k.x - k.w} ${k.y}l${k.w}-2 ${k.w} 2-${k.w} 2z`}
        fill="#e4e4fc"
        fillOpacity={1 - Math.max(0, (k.x - 415) / 100)}
      />
    ))}
    <g stroke="#000" strokeWidth={1.8} fill="none">
      <path d="M362 111v-6h42c2 10 16 10 17 0h41v7" />
      <path d="M436 106l-7 64 6 15M435 265l-5 15 1 9 2 6M447 295c3 5 3 11 0 16" />
      <path d="M377 170h70M373 280h77M373 287h77M341 295h141M341 311h141" />
      <path d="M358 373h108M362 377h101M336 557h152M303 568h217M303 599h217" />
      <path d="M386 312v61l2 4-13 180c0 5-1 9-4 11M360 568v31" />
    </g>
  </Model>
);

const AxisCompass = () => (
  <Compass viewBox="1070 62 112 122" aria-label="Compass">
    <path d="M1102 86c28 0 48 18 48 47h-48z" fill="url(#dither)" stroke="#d8ccff" strokeWidth={2} />
    <path d="M1102 72v102M1076 175h62" stroke="#d8ccff" strokeWidth={2} />
    <circle cx={1102} cy={72} r={3.5} fill="#d8ccff" />
    <circle cx={1102} cy={175} r={5} fill="#d00008" />
    <g fill="#ecec40" fontFamily="DejaVu Sans" fontSize={13}>
      <text x={1110} y={74}>z</text>
      <text x={1114} y={136}>y</text>
      <text x={1159} y={136}>x</text>
    </g>
  </Compass>
);

/* ---------- floating tool windows ---------- */

const FloatBox = styled.section<{ $x: number; $y: number; $w: number; $row?: boolean }>`
  position: absolute;
  right: ${p => p.$x}px;
  top: ${p => p.$y}px;
  width: ${p => p.$w}px;
  padding: ${p => (p.$row ? '4px 7px 7px' : '4px 6px 5px')};
  border: 1px solid #dcdce4;
  background: #fcfcfc;
`;

const FloatTitle = styled.header<{ $row?: boolean }>`
  display: flex;
  align-items: center;
  justify-content: flex-end;
  gap: ${p => (p.$row ? 24 : 0)}px;
  height: 20px;
  margin-bottom: 5px;
  padding-right: ${p => (p.$row ? 1 : 2)}px;
  font-size: 15px;
  line-height: 20px;
  color: #303030;
`;

const Close = styled.button`
  flex: none;
  width: 19px;
  height: 19px;
  background: #c75056;
  color: #fff;
  font-size: 10px;
  line-height: 17px;
`;

const FloatBody = styled.div<{ $row?: boolean }>`
  display: flex;
  align-items: center;
  ${p =>
    p.$row
      ? css`
          height: 37px;
          background: linear-gradient(#f0f0fa 0, #d4d4ec 10px, #cfcfe6 22px, #9c9cb4 100%);
        `
      : css`
          flex-direction: column;
          padding-bottom: 2px;
          background: linear-gradient(90deg, #f0f0fa 0, #d4d4ec 8px, #cdcde6 24px, #9c9cb4 100%);
        `}
  border: 1px solid #d4d4e0;
`;

type FloatProps = { title: string; x: number; y: number; w: number; row?: boolean; items: Tool[] };
const Float = ({ title, x, y, w, row, items }: FloatProps) => (
  <FloatBox $x={x} $y={y} $w={w} $row={row}>
    <FloatTitle $row={row}>
      <span>{title}</span>
      <Close type="button" aria-label="Close">x</Close>
    </FloatTitle>
    <FloatBody $row={row}>
      <Tools items={items} column={!row} />
    </FloatBody>
  </FloatBox>
);

const menus = ['File', 'Edit', 'View', 'Insert', 'Tools', 'Analyze', 'Window', 'Help'];

export default function App() {
  return (
    <Frame>
      <GlobalStyle />
      <MenuBar>
        <AppMark viewBox="0 0 20 18">
          <defs>
            <radialGradient id="knob" cx=".4" cy=".35" r=".7">
              <stop offset="0" stopColor="#e0e0e0" />
              <stop offset="1" stopColor="#707074" />
            </radialGradient>
            <pattern id="dots" width={3} height={3} patternUnits="userSpaceOnUse">
              <rect width={1.5} height={1.5} fill="#186090" />
            </pattern>
            <pattern id="dither" width={2} height={2} patternUnits="userSpaceOnUse">
              <rect width={2} height={2} fill="#141450" />
              <rect width={1} height={1} fill="#2c2c64" />
            </pattern>
            <radialGradient id="flare">
              <stop offset="0" stopColor="#fff0c0" />
              <stop offset=".4" stopColor="#e08030" />
              <stop offset="1" stopColor="#0a0a10" stopOpacity="0" />
            </radialGradient>
          </defs>
          <rect width={20} height={18} fill="#0a0a10" />
          <circle cx={13} cy={6} r={8} fill="url(#flare)" />
          <path d="M0 2h6l9 14v2H9C8 12 5 9 0 8z" fill="#2c7cc0" />
          <path d="M1 2l6 4 4 11H9C8 12 5 8 0 6z" fill="#88c8e0" />
        </AppMark>
        <MenuItem type="button" $active>Start</MenuItem>
        <MenuItem type="button" $wide>ENOVIA V5 VPM</MenuItem>
        {menus.map(m => <MenuItem key={m} type="button">{m}</MenuItem>)}
        <WindowButtons>
          <WindowButton type="button" aria-label="Minimize"><svg viewBox="0 0 16 16"><path d="M5 11h6" stroke="#505860" strokeWidth={2} /></svg></WindowButton>
          <WindowButton type="button" aria-label="Restore"><svg viewBox="0 0 16 16"><path d="M6 6V4h6v5h-2M4 7h6v5H4z" fill="none" stroke="#687078" strokeWidth={1.2} /></svg></WindowButton>
          <WindowButton type="button" aria-label="Close window"><svg viewBox="0 0 16 16"><path d="M5 5l6 6M11 5l-6 6" stroke="#505860" strokeWidth={1.8} /></svg></WindowButton>
        </WindowButtons>
      </MenuBar>

      <TopBar>
        <Grip $size={14} />
        <Combos>
          <Combo>
            <Select aria-label="Fill color"><option /></Select>
            <Sample viewBox="0 0 58 19"><rect x={4} y={2} width={33} height={15} fill="#0000f8" stroke="#606068" /></Sample>
            <ComboArrow />
          </Combo>
          <Combo><Select aria-label="Transparency"><option>Auto</option></Select><ComboArrow /></Combo>
          <Combo>
            <Select aria-label="Line weight"><option /></Select>
            <Sample viewBox="0 0 58 19"><path d="M5 9.5h37" stroke="#000" /></Sample>
            <ComboArrow />
          </Combo>
          <Combo>
            <Select aria-label="Line type"><option /></Select>
            <Sample viewBox="0 0 58 19"><path d="M5 9.5h37" stroke="#000" strokeDasharray="8 8" /></Sample>
            <ComboArrow />
          </Combo>
          <Combo $small>
            <Select aria-label="Point symbol"><option /></Select>
            <Sample viewBox="0 0 36 19"><rect x={6} y={8} width={3} height={3} /></Sample>
            <ComboArrow />
          </Combo>
          <Combo $small><Select aria-label="Rendering style" disabled><option>Aut</option></Select><ComboArrow $off /></Combo>
          <Combo><Select aria-label="Layer"><option>None</option></Select><ComboArrow /></Combo>
        </Combos>
        <Tools items={['brush', 'wizard', '|', 'point', 'curve', 'surface', 'solid']} />
        <Divider />
        <Tools items={['pick', 'pickFace']} />
        <Spacer />
        <Tools items={['|', 'castle', 'castleGo', 'castleSync', '|', ['render+', 30], 'section', 'specTree', 'specTreeRed', '|', 'cutLink', 'skip', 'listA', 'listA']} />
      </TopBar>

      <Work>
        <Viewport>
          <Assembly />
          <ul>
            <Row><ProductIcon /><Label $selected>Product1</Label></Row>
            {parts.map(p => (
              <Row key={p}><Plus /><ProductIcon part /><Label>{p}</Label></Row>
            ))}
            <Row><Plus /><ConstraintsIcon /><Label>Constraints</Label></Row>
            <Row>
              <Joint $end viewBox="0 0 26 39"><path d="M10 0v20h16" fill="none" stroke="#fff" strokeWidth={2} /></Joint>
              <Label>Applications</Label>
            </Row>
          </ul>
          <AxisCompass />
          <MiniAxes viewBox="1170 565 45 40">
            <path d="M1178.500 579v22h23" fill="none" stroke="#fff" />
            <g fill="#fff" fontFamily="DejaVu Sans" fontSize={12}>
              <text x={1178} y={577}>z</text>
              <text x={1202} y={602}>x</text>
            </g>
          </MiniAxes>
          <Float title="Move" x={284} y={17} w={145} row items={[['|', 12], 'handMove', ['handSnap+', 30], 'explode', 'handStar']} />
          <Float title="C." x={183} y={216} w={50} items={[['|', 12], 'coincidence', 'contact', 'offset', 'angle', 'anchor', 'clip', 'fixDim', 'pins', 'swap', 'pattern']} />
          <Float title="P.." x={61} y={124} w={52} items={[['|', 14], 'newGears', 'newProduct', 'newPart', 'insert', 'insertPos', 'replace', 'reorder', 'numbering', 'graphTree', 'loadTree', 'instances+']} />
        </Viewport>
        <SideBar>
          <Tools
            column
            items={[['|', 14], ['planeTop', 26], ['|', 24], ['select+', 26], '|', ['gearSelect+', 26], '|', ['weld', 24], ['textNote+', 28], ['flagNote+', 32], ['view+', 32], 'stamp', ['|', 28], 'boxA', 'boxB', 'boxC', 'boxD']}
          />
        </SideBar>
      </Work>

      <BottomBar>
        <Tools
          items={[
            ['|', 12], 'file', 'open', 'save', 'print', 'cut', 'copy', 'paste', ['undo+', 30], ['redo+', 30], 'help',
            '|', 'formula', 'comment', ['link', 22], ['table+', 30], 'relations', ['lock+', 30], 'equiv',
            ['|', 24], 'fly', 'fitAll', 'pan', 'rotate', 'zoomIn', 'zoomOut', 'normal', 'views', ['cube+', 30], ['shaded+', 30], 'hideShow', 'swapSpace',
            '|', 'camera', '|', 'catalog', ['|', 18], 'measure', 'caliper', ['weight', 24], '|', 'spiral', '|', 'book', ['|', 18],
          ]}
        />
        <Spacer />
        <Logo viewBox="0 0 46 38">
          <path d="M-18 6l4 4-4 4M-13 6l4 4-4 4" fill="none" stroke="#fff" strokeWidth={1.2} />
          <path d="M10 3c6-1 9 1 6 5l-4 4" fill="none" stroke="#d82030" strokeWidth={2} />
          <path d="M5 15c9-1 11 2 7 7-2 4-6 6-10 6l5-9" fill="none" stroke="#503890" strokeWidth={2} />
          <path d="M25 12c-7-2-9 1-7 4s4 6-3 8" fill="none" stroke="#e89020" strokeWidth={2} />
          <text x={7} y={34} fontFamily="Liberation Sans" fontSize={10} fontWeight={700} fontStyle="italic" fill="#302868">CATIA</text>
        </Logo>
      </BottomBar>
    </Frame>
  );
}
